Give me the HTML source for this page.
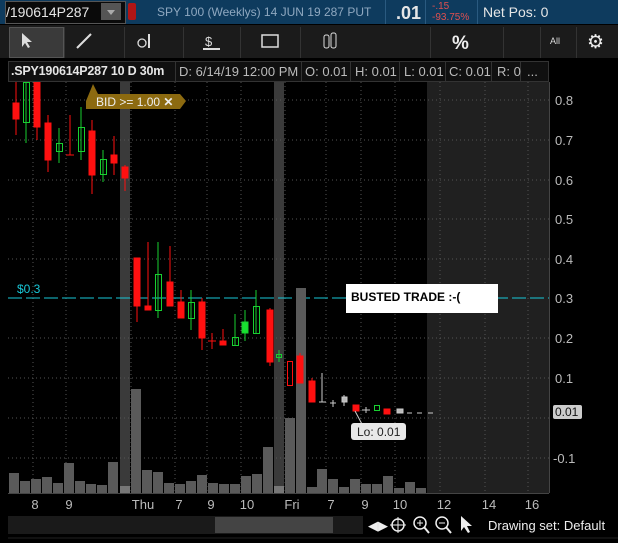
<!DOCTYPE html><html><head><style>
body{margin:0;width:618px;height:543px;background:#000;overflow:hidden;font-family:"Liberation Sans",sans-serif;position:relative}
.a{position:absolute}
.top{left:0;top:0;width:618px;height:24px;background:#0e3b5e}
.t{color:#e6e6e6;font-size:13px;white-space:nowrap}
.tb{left:0;top:25px;width:618px;height:33px;background:#1b1b1b}
.cell{position:absolute;top:27px;height:31px;border-right:1px solid #333}
.dv{position:absolute;top:61px;width:1px;height:21px;background:#333}
</style></head><body>
<div class="a top"></div>
<div class="a" style="left:5px;top:1px;width:119px;height:21px;background:#0a0a0a;border:1px solid #555"></div>
<div class="a t" style="left:6px;top:4px;font-size:14px">/190614P287</div>
<div class="a" style="left:101px;top:3px;width:20px;height:17px;background:#555"></div>
<div class="a" style="left:107px;top:10px;border-left:4px solid transparent;border-right:4px solid transparent;border-top:5px solid #aaa"></div>
<div class="a" style="left:128px;top:3px;width:8px;height:17px;background:#b01515;border-radius:2px"></div>
<div class="a t" style="left:157px;top:5px;color:#8fa8c0;font-size:12px">SPY 100 (Weeklys) 14 JUN 19 287 PUT</div>
<div class="a" style="left:385px;top:0;width:1px;height:24px;background:#2a5a80"></div>
<div class="a t" style="left:396px;top:3px;font-size:18px;font-weight:bold">.01</div>
<div class="a" style="left:425px;top:0;width:1px;height:24px;background:#2a5a80"></div>
<div class="a t" style="left:432px;top:1px;font-size:10px;color:#e05050;line-height:11px">-.15<br>-93.75%</div>
<div class="a" style="left:477px;top:0;width:1px;height:24px;background:#2a5a80"></div>
<div class="a t" style="left:483px;top:4px;font-size:14px">Net Pos: 0</div>
<div class="a tb"></div>
<div class="a" style="left:9px;top:27px;width:55px;height:31px;background:#3a3a3a;border:1px solid #555;box-sizing:border-box"></div>
<div class="cell" style="left:64px;width:0"></div><div class="cell" style="left:124px;width:0"></div><div class="cell" style="left:183px;width:0"></div><div class="cell" style="left:240px;width:0"></div><div class="cell" style="left:300px;width:0"></div><div class="cell" style="left:430px;width:0"></div><div class="cell" style="left:503px;width:0"></div><div class="cell" style="left:540px;width:0"></div><div class="cell" style="left:576px;width:0"></div>
<svg class="a" style="left:0;top:25px" width="618" height="33">
<path d="M22 8 L22 22 L25 18 L28 23 L30 22 L27 17 L32 17 Z" fill="#ddd"/>
<line x1="77" y1="23" x2="91" y2="9" stroke="#ddd" stroke-width="2"/>
<circle cx="142" cy="18" r="4" stroke="#ddd" fill="none" stroke-width="1.3"/><line x1="149" y1="9" x2="149" y2="23" stroke="#ddd" stroke-width="2"/>
<text x="205" y="21" fill="#ddd" font-size="13" font-family="Liberation Sans">$</text><line x1="203" y1="24" x2="220" y2="24" stroke="#ddd" stroke-width="2"/>
<rect x="262" y="10" width="16" height="12" stroke="#ddd" fill="none" stroke-width="1.5"/>
<rect x="324" y="10" width="5" height="13" rx="2" stroke="#ddd" fill="none"/><rect x="331" y="8" width="5" height="15" rx="2" stroke="#ddd" fill="none"/>
<text x="452" y="24" fill="#eee" font-size="19" font-weight="bold" font-family="Liberation Sans">%</text>
<text x="550" y="19" fill="#ddd" font-size="9" font-family="Liberation Sans">All</text>
<text x="587" y="23" fill="#eee" font-size="19" font-family="DejaVu Sans">⚙</text>
</svg>
<div class="a" style="left:8px;top:61px;width:541px;height:21px;background:#101010;border:1px solid #333;box-sizing:border-box"></div>
<div class="dv" style="left:175px"></div><div class="dv" style="left:301px"></div><div class="dv" style="left:350px"></div><div class="dv" style="left:399px"></div><div class="dv" style="left:445px"></div><div class="dv" style="left:491px"></div><div class="dv" style="left:520px"></div>
<div class="a t" style="left:11px;top:64px;font-weight:bold;font-size:12.5px;letter-spacing:-0.2px">.SPY190614P287 10 D 30m</div>
<div class="a t" style="left:179px;top:64px;color:#bbb">D: 6/14/19 12:00 PM</div>
<div class="a t" style="left:305px;top:64px;color:#bbb">O: 0.01</div>
<div class="a t" style="left:355px;top:64px;color:#bbb">H: 0.01</div>
<div class="a t" style="left:404px;top:64px;color:#bbb">L: 0.01</div>
<div class="a t" style="left:449px;top:64px;color:#bbb">C: 0.01</div>
<div class="a t" style="left:497px;top:64px;color:#bbb">R: 0</div>
<div class="a t" style="left:527px;top:64px;color:#bbb">...</div>
<svg class="a" style="left:0;top:82px" width="618" height="461">
<g transform="translate(0,-82)">
<rect x="427" y="82" width="122" height="411" fill="#202020"/>
<rect x="120" y="82" width="10" height="411" fill="#3a3a3a"/>
<rect x="274" y="82" width="10" height="411" fill="#3a3a3a"/>
<g stroke="#555" stroke-dasharray="1,3">
<line x1="8" y1="100" x2="549" y2="100"/><line x1="8" y1="140" x2="549" y2="140"/><line x1="8" y1="180" x2="549" y2="180"/><line x1="8" y1="219" x2="549" y2="219"/><line x1="8" y1="259" x2="549" y2="259"/><line x1="8" y1="338" x2="549" y2="338"/><line x1="8" y1="378" x2="549" y2="378"/><line x1="8" y1="418" x2="549" y2="418"/><line x1="8" y1="458" x2="549" y2="458"/>
<line x1="33" y1="82" x2="33" y2="493"/><line x1="66" y1="82" x2="66" y2="493"/><line x1="131" y1="82" x2="131" y2="493"/><line x1="175" y1="82" x2="175" y2="493"/><line x1="207" y1="82" x2="207" y2="493"/><line x1="241" y1="82" x2="241" y2="493"/><line x1="285" y1="82" x2="285" y2="493"/><line x1="326" y1="82" x2="326" y2="493"/><line x1="361" y1="82" x2="361" y2="493"/><line x1="395" y1="82" x2="395" y2="493"/><line x1="440" y1="82" x2="440" y2="493"/><line x1="485" y1="82" x2="485" y2="493"/><line x1="528" y1="82" x2="528" y2="493"/>
</g>
<line x1="8" y1="298" x2="549" y2="298" stroke="#19c8d8" stroke-dasharray="14,4"/>
<g fill="#5a5a5a">
<rect x="9" y="473" width="10" height="20"/><rect x="20" y="481" width="10" height="12"/><rect x="31" y="479" width="10" height="14"/><rect x="42" y="477" width="10" height="16"/><rect x="53" y="483" width="10" height="10"/><rect x="64" y="463" width="10" height="30"/><rect x="75" y="481" width="10" height="12"/><rect x="86" y="484" width="10" height="9"/><rect x="97" y="485" width="10" height="8"/><rect x="108" y="462" width="10" height="31"/><rect x="120" y="486" width="10" height="7" fill="#777"/>
<rect x="131" y="389" width="10" height="104"/><rect x="142" y="470" width="10" height="23"/><rect x="153" y="472" width="10" height="21"/><rect x="164" y="483" width="10" height="10"/><rect x="175" y="484" width="10" height="9"/><rect x="186" y="481" width="10" height="12"/><rect x="197" y="475" width="10" height="18"/><rect x="208" y="483" width="10" height="10"/><rect x="219" y="484" width="10" height="9"/><rect x="230" y="484" width="10" height="9"/><rect x="241" y="476" width="10" height="17"/><rect x="252" y="474" width="10" height="19"/><rect x="263" y="447" width="10" height="46"/><rect x="274" y="486" width="10" height="7" fill="#777"/>
<rect x="285" y="418" width="10" height="75"/><rect x="296" y="288" width="10" height="205"/><rect x="307" y="487" width="10" height="6"/><rect x="317" y="469" width="10" height="24"/><rect x="328" y="479" width="10" height="14"/><rect x="339" y="487" width="10" height="6"/><rect x="350" y="479" width="10" height="14"/><rect x="361" y="484" width="10" height="9"/><rect x="372" y="484" width="10" height="9"/><rect x="383" y="476" width="10" height="17"/><rect x="394" y="488" width="10" height="5"/><rect x="405" y="482" width="10" height="11"/><rect x="416" y="488" width="10" height="5"/>
</g>
<g stroke="#ff1010" fill="#ff1010">
<line x1="16" y1="82" x2="16" y2="135"/><rect x="13" y="103" width="6" height="16"/>
<line x1="37" y1="82" x2="37" y2="140"/><rect x="34" y="82" width="6" height="45"/>
<line x1="48" y1="115" x2="48" y2="172"/><rect x="45" y="123" width="6" height="37"/>
<line x1="70" y1="115" x2="70" y2="155"/><line x1="66" y1="155" x2="74" y2="155"/>
<line x1="92" y1="120" x2="92" y2="194"/><rect x="89" y="131" width="6" height="44"/>
<line x1="114" y1="136" x2="114" y2="175"/><rect x="111" y="155" width="6" height="8"/>
<line x1="125" y1="165" x2="125" y2="191"/><rect x="122" y="167" width="6" height="11"/>
<line x1="137" y1="258" x2="137" y2="322"/><rect x="134" y="258" width="6" height="48"/>
<line x1="148" y1="242" x2="148" y2="310"/><rect x="145" y="306" width="6" height="4"/>
<line x1="170" y1="246" x2="170" y2="306"/><rect x="167" y="282" width="6" height="24"/>
<line x1="181" y1="290" x2="181" y2="318"/><rect x="178" y="302" width="6" height="16"/>
<line x1="202" y1="298" x2="202" y2="350"/><rect x="199" y="302" width="6" height="36"/>
<line x1="212" y1="333" x2="212" y2="349"/><line x1="208" y1="341" x2="216" y2="341"/>
<line x1="223" y1="329" x2="223" y2="345"/><rect x="220" y="341" width="6" height="4"/>
<line x1="270" y1="308" x2="270" y2="366"/><rect x="267" y="310" width="6" height="52"/>
<line x1="300" y1="353" x2="300" y2="383"/><rect x="297" y="356" width="6" height="27"/>
<line x1="312" y1="378" x2="312" y2="402"/><rect x="309" y="381" width="6" height="21"/>
<rect x="353" y="405" width="6" height="6"/><rect x="384" y="409" width="6" height="5"/>
</g>
<rect x="287.5" y="361.5" width="5" height="24" stroke="#ff1010" fill="none"/>
<g stroke="#18d030" fill="none">
<line x1="26" y1="82" x2="26" y2="143"/><rect x="23.5" y="82.5" width="6" height="40"/>
<line x1="59" y1="128" x2="59" y2="163"/><rect x="56.5" y="143.5" width="6" height="8"/>
<line x1="81" y1="107" x2="81" y2="160"/><rect x="78.5" y="127.5" width="6" height="24"/>
<line x1="103" y1="150" x2="103" y2="182"/><rect x="100.5" y="159.5" width="6" height="15"/>
<line x1="158" y1="242" x2="158" y2="318"/><rect x="155.5" y="274.5" width="6" height="36"/>
<line x1="191" y1="290" x2="191" y2="330"/><rect x="188.5" y="302.5" width="6" height="16"/>
<line x1="235" y1="314" x2="235" y2="345"/><rect x="232.5" y="337.5" width="6" height="8"/>
<line x1="245" y1="310" x2="245" y2="341"/><rect x="242" y="322" width="6" height="11" fill="#18e030"/>
<line x1="256" y1="290" x2="256" y2="333"/><rect x="253.5" y="306.5" width="6" height="27"/>
<line x1="279" y1="350" x2="279" y2="362"/><rect x="276.5" y="354.5" width="5" height="3"/>
<rect x="374.5" y="405.5" width="5" height="5"/>
</g>
<g stroke="#ccc" fill="#bbb">
<line x1="322" y1="373" x2="322" y2="402"/><line x1="319" y1="402" x2="326" y2="402"/>
<line x1="333" y1="400" x2="333" y2="407"/><line x1="330" y1="403" x2="336" y2="403"/>
<line x1="344" y1="395" x2="344" y2="406"/><rect x="342" y="397" width="5" height="5"/>
<line x1="366" y1="407" x2="366" y2="413"/><line x1="362" y1="410" x2="370" y2="410"/>
<rect x="397" y="409" width="6" height="4"/>
<line x1="407" y1="413" x2="412" y2="413"/><line x1="417" y1="413" x2="422" y2="413"/><line x1="428" y1="413" x2="433" y2="413"/>
</g>
<line x1="355" y1="411" x2="363" y2="426" stroke="#ccc"/>
<rect x="351" y="423" width="55" height="17" rx="3" fill="#e8e8e8"/>
<text x="357" y="436" font-size="12" fill="#222" font-family="Liberation Sans">Lo: 0.01</text>
<path d="M86 101 L93 84 L98 94 L180 94 L186 101 L180 109 L86 109 Z" fill="#8c6a10"/>
<text x="96" y="106" font-size="12" fill="#eee" font-family="Liberation Sans">BID &gt;= 1.00 <tspan font-weight="bold">✕</tspan></text>
<text x="17" y="293" font-size="12" fill="#19c8d8" font-family="Liberation Sans">$0.3</text>
<rect x="346" y="284" width="152" height="29" fill="#fff"/>
<text x="351" y="301" font-size="12" font-weight="bold" fill="#000" font-family="Liberation Sans">BUSTED TRADE :-(</text>
<line x1="549.5" y1="82" x2="549.5" y2="493" stroke="#444"/>
<line x1="8" y1="493.5" x2="549" y2="493.5" stroke="#444"/>
<g fill="#bbb" font-size="13" font-family="Liberation Sans">
<text x="555" y="105">0.8</text><text x="555" y="145">0.7</text><text x="555" y="185">0.6</text><text x="555" y="224">0.5</text><text x="555" y="264">0.4</text><text x="555" y="303">0.3</text><text x="555" y="343">0.2</text><text x="555" y="383">0.1</text><text x="553" y="463">-0.1</text>
</g>
<rect x="553" y="405" width="29" height="14" rx="2" fill="#ccc"/>
<text x="555" y="416" font-size="12" fill="#111" font-family="Liberation Sans">0.01</text>
<g fill="#bbb" font-size="13" font-family="Liberation Sans" text-anchor="middle">
<text x="35" y="509">8</text><text x="69" y="509">9</text><text x="143" y="509">Thu</text><text x="179" y="509">7</text><text x="211" y="509">9</text><text x="247" y="509">10</text><text x="292" y="509">Fri</text><text x="331" y="509">7</text><text x="365" y="509">9</text><text x="400" y="509">10</text><text x="444" y="509">12</text><text x="489" y="509">14</text><text x="532" y="509">16</text>
</g>
<rect x="8" y="516" width="355" height="18" fill="#1a1a1a"/>
<rect x="215" y="517" width="118" height="16" fill="#444"/>
<text x="563" y="76" font-size="14" fill="#ddd" font-family="DejaVu Sans">⤨</text>
<text x="368" y="530" font-size="13" fill="#eee" font-family="DejaVu Sans">◀▶</text>
<circle cx="398" cy="525" r="6" stroke="#eee" fill="none" stroke-width="1.5"/><line x1="398" y1="517" x2="398" y2="533" stroke="#eee"/><line x1="390" y1="525" x2="406" y2="525" stroke="#eee"/>
<circle cx="420" cy="523" r="6" stroke="#eee" fill="none" stroke-width="1.5"/><line x1="424" y1="527" x2="429" y2="533" stroke="#eee" stroke-width="2"/><path d="M417 523h6M420 520v6" stroke="#eee"/>
<circle cx="442" cy="523" r="6" stroke="#eee" fill="none" stroke-width="1.5"/><line x1="446" y1="527" x2="451" y2="533" stroke="#eee" stroke-width="2"/><path d="M439 523h6" stroke="#eee"/>
<path d="M461 516 L461 531 L464 527 L468 533 L470 532 L467 526 L472 526 Z" fill="#eee"/>
<text x="488" y="530" font-size="13" fill="#eee" font-family="Liberation Sans">Drawing set: Default</text>
<line x1="8" y1="538" x2="618" y2="538" stroke="#222"/>
</g></svg>
</body></html>
